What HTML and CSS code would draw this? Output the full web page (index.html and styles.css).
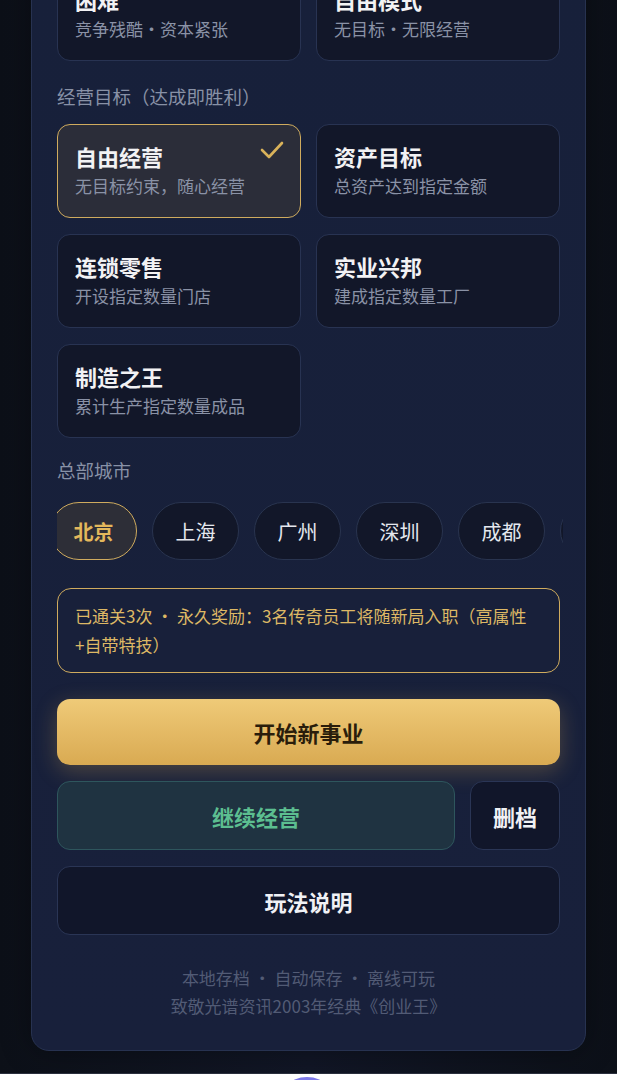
FILE: index.html
```html
<!DOCTYPE html>
<html lang="zh-CN">
<head>
    <meta charset="UTF-8">
    <meta name="viewport" content="width=device-width, initial-scale=1.0">
    <title>创业王 · 新的事业</title>
    <link rel="stylesheet" href="styles.css">
</head>
<body>
    <div class="panel">
        <div class="card-grid">
            <div class="opt-card">
                <div class="opt-title">困难</div>
                <div class="opt-desc">竞争残酷·资本紧张</div>
            </div>
            <div class="opt-card">
                <div class="opt-title">自由模式</div>
                <div class="opt-desc">无目标·无限经营</div>
            </div>
        </div>

        <div class="section-label">经营目标（达成即胜利）</div>
        <div class="card-grid">
            <div class="opt-card selected">
                <div class="opt-title">自由经营</div>
                <div class="opt-desc">无目标约束，随心经营</div>
                <svg class="check" width="24" height="18" viewBox="0 0 24 18">
                    <polyline points="2,9 9,16 22,2" fill="none" stroke="#d9b25a" stroke-width="2.6" stroke-linecap="round" stroke-linejoin="round"/>
                </svg>
            </div>
            <div class="opt-card">
                <div class="opt-title">资产目标</div>
                <div class="opt-desc">总资产达到指定金额</div>
            </div>
            <div class="opt-card">
                <div class="opt-title">连锁零售</div>
                <div class="opt-desc">开设指定数量门店</div>
            </div>
            <div class="opt-card">
                <div class="opt-title">实业兴邦</div>
                <div class="opt-desc">建成指定数量工厂</div>
            </div>
            <div class="opt-card">
                <div class="opt-title">制造之王</div>
                <div class="opt-desc">累计生产指定数量成品</div>
            </div>
        </div>

        <div class="section-label city-label">总部城市</div>
        <div class="cities">
            <div class="city-track">
                <div class="city active">北京</div>
                <div class="city">上海</div>
                <div class="city">广州</div>
                <div class="city">深圳</div>
                <div class="city">成都</div>
                <div class="city"></div>
            </div>
        </div>

        <div class="notice">已通关3次 · 永久奖励：3名传奇员工将随新局入职（高属性<br>+自带特技）</div>

        <button class="btn btn-start">开始新事业</button>
        <div class="btn-row">
            <button class="btn btn-continue">继续经营</button>
            <button class="btn btn-dark btn-delete">删档</button>
        </div>
        <button class="btn btn-dark btn-help">玩法说明</button>

        <div class="footer">
            <p>本地存档 · 自动保存 · 离线可玩</p>
            <p>致敬光谱资讯2003年经典《创业王》</p>
        </div>
    </div>

    <div class="dock">
        <div class="dock-ball"></div>
    </div>
</body>
</html>
```

FILE: styles.css
```css
body {
    font-family: "Noto Sans CJK SC", "Noto Sans", sans-serif;
    background: linear-gradient(90deg, #0c1018 0%, #111626 50%, #0c1018 100%);
    margin: 0;
    color: #eef0f4;
}
.panel {
    margin: -59px 31px 0;
    padding: 25px 25px 25px;
    background: linear-gradient(180deg, #17203a 0%, #18203b 100%);
    border: 1px solid #273250;
    border-radius: 18px;
    box-shadow: 0 0 30px rgba(0,0,0,0.35);
}
.card-grid {
    display: grid;
    grid-template-columns: 1fr 1fr;
    gap: 16px 15px;
}
.opt-card {
    position: relative;
    padding: 17px 17px 19px;
    background: #121729;
    border: 1px solid #283352;
    border-radius: 13px;
}
.opt-card.selected {
    background: #2b2d39;
    border-color: #cfab5e;
}
.opt-title {
    font-size: 22px;
    line-height: 28px;
    font-weight: bold;
    color: #f2f2f4;
}
.opt-desc {
    margin-top: 4px;
    font-size: 17px;
    line-height: 24px;
    color: #8a92a6;
}
.check {
    position: absolute;
    top: 16px;
    right: 16px;
}
.section-label {
    margin: 22px 0 15px;
    font-size: 18.5px;
    line-height: 26px;
    color: #8891a6;
}
.city-label {
    margin: 19px 0 19px;
}
.cities {
    overflow: hidden;
    margin-right: -3px;
}
.city-track {
    display: flex;
    gap: 15px;
    margin-left: -7px;
}
.city {
    flex: none;
    width: 87px;
    height: 58px;
    box-sizing: border-box;
    display: flex;
    align-items: center;
    justify-content: center;
    font-size: 20px;
    color: #e4e7ee;
    background: #121729;
    border: 1.5px solid #29344f;
    border-radius: 29px;
}
.city.active {
    color: #e3b85c;
    font-weight: bold;
    background: #2d2e37;
    border-color: #cfab5e;
}
.notice {
    margin-top: 28px;
    padding: 12px 17px 13px;
    font-size: 17px;
    line-height: 29px;
    color: #ddb865;
    border: 1.5px solid #cfab5e;
    border-radius: 14px;
    background: #18203a;
}
.btn {
    display: block;
    width: 100%;
    box-sizing: border-box;
    font-family: inherit;
    font-size: 22px;
    font-weight: bold;
    border-radius: 13px;
    cursor: pointer;
}
.btn-start {
    margin-top: 26px;
    height: 66px;
    color: #2a1d0b;
    border: none;
    background: linear-gradient(180deg, #efca78 0%, #d9aa52 100%);
    box-shadow: 0 6px 22px rgba(222,172,84,0.28);
}
.btn-row {
    display: flex;
    gap: 15px;
    margin-top: 16px;
}
.btn-continue {
    flex: 1;
    height: 69px;
    color: #5cbe90;
    background: #1f3341;
    border: 1.5px solid #2e565d;
}
.btn-dark {
    color: #f0f1f5;
    background: #11162a;
    border: 1.5px solid #2a3555;
}
.btn-delete {
    width: 90px;
    flex: none;
    height: 69px;
}
.btn-help {
    margin-top: 16px;
    height: 69px;
}
.footer {
    margin: 29px 0 5px;
    text-align: center;
    font-size: 17px;
    line-height: 28px;
    color: #525b75;
}
.footer p {
    margin: 0;
}
.dock {
    position: relative;
    margin-top: 22px;
    height: 80px;
    background: #ffffff;
    border-top: 1px solid #2a2f3d;
}
.dock-ball {
    position: absolute;
    left: 50%;
    top: 3px;
    width: 64px;
    height: 64px;
    margin-left: -34px;
    border-radius: 50%;
    background: #7d79e8;
}
```
